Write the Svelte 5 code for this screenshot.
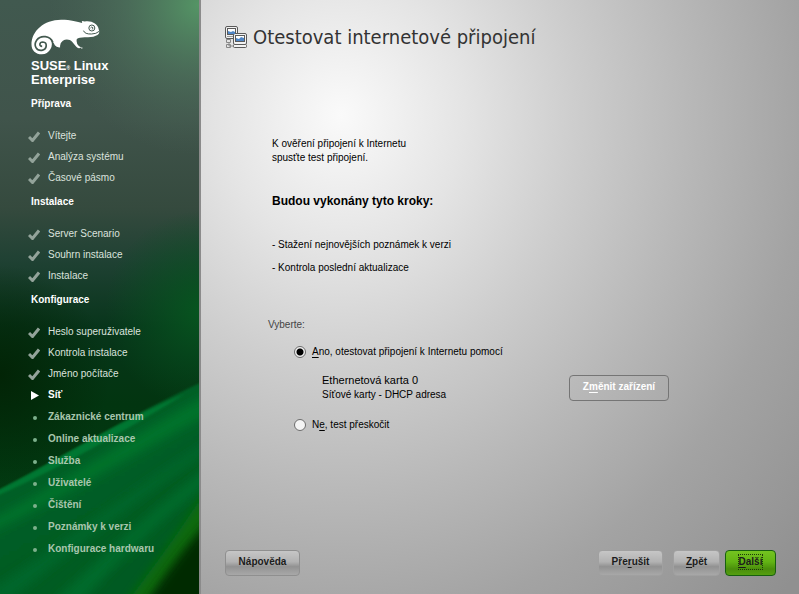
<script>
  const sections = [
    {
      title: 'Příprava',
      steps: [
        { label: 'Vítejte', state: 'done' },
        { label: 'Analýza systému', state: 'done' },
        { label: 'Časové pásmo', state: 'done' }
      ]
    },
    {
      title: 'Instalace',
      steps: [
        { label: 'Server Scenario', state: 'done' },
        { label: 'Souhrn instalace', state: 'done' },
        { label: 'Instalace', state: 'done' }
      ]
    },
    {
      title: 'Konfigurace',
      steps: [
        { label: 'Heslo superuživatele', state: 'done' },
        { label: 'Kontrola instalace', state: 'done' },
        { label: 'Jméno počítače', state: 'done' },
        { label: 'Síť', state: 'current' },
        { label: 'Zákaznické centrum', state: 'pending' },
        { label: 'Online aktualizace', state: 'pending' },
        { label: 'Služba', state: 'pending' },
        { label: 'Uživatelé', state: 'pending' },
        { label: 'Čištění', state: 'pending' },
        { label: 'Poznámky k verzi', state: 'pending' },
        { label: 'Konfigurace hardwaru', state: 'pending' }
      ]
    }
  ];

  let choice = $state('yes');
</script>

<div class="installer">
  <aside>
    <svg class="backdrop" viewBox="0 0 199 594" preserveAspectRatio="none" aria-hidden="true">
      <defs>
        <linearGradient id="base" x1="0" y1="0" x2="0" y2="1">
          <stop offset="0" stop-color="#41594f" />
          <stop offset="0.2" stop-color="#40544b" />
          <stop offset="0.35" stop-color="#354a3e" />
          <stop offset="0.44" stop-color="#1f4133" />
          <stop offset="0.55" stop-color="#08351b" />
          <stop offset="0.68" stop-color="#023510" />
          <stop offset="1" stop-color="#014012" />
        </linearGradient>
        <radialGradient id="corner" gradientUnits="userSpaceOnUse" cx="199" cy="5" r="150">
          <stop offset="0" stop-color="#549565" />
          <stop offset="0.5" stop-color="#517a60" stop-opacity="0.5" />
          <stop offset="1" stop-color="#4c6858" stop-opacity="0" />
        </radialGradient>
        <radialGradient id="glow" gradientUnits="userSpaceOnUse" cx="205" cy="310" r="100">
          <stop offset="0" stop-color="#06561f" />
          <stop offset="1" stop-color="#06501f" stop-opacity="0" />
        </radialGradient>
        <radialGradient id="shade" gradientUnits="userSpaceOnUse" cx="0" cy="375" r="110">
          <stop offset="0" stop-color="#022406" />
          <stop offset="1" stop-color="#022406" stop-opacity="0" />
        </radialGradient>
        <linearGradient id="wave" x1="0" y1="0" x2="0.5" y2="1">
          <stop offset="0" stop-color="#02632a" />
          <stop offset="1" stop-color="#015a22" />
        </linearGradient>
        <filter id="soft" x="-20%" y="-20%" width="140%" height="140%">
          <feGaussianBlur stdDeviation="5" />
        </filter>
        <filter id="edge" x="-10%" y="-10%" width="120%" height="120%">
          <feGaussianBlur stdDeviation="1" />
        </filter>
      </defs>
      <rect width="199" height="594" fill="url(#base)" />
      <rect width="199" height="200" fill="url(#corner)" />
      <rect y="200" width="199" height="215" fill="url(#glow)" />
      <rect y="260" width="199" height="230" fill="url(#shade)" />
      <path d="M-5 492C55 462 120 420 204 381V600H-5Z" fill="url(#wave)" filter="url(#edge)" />
      <path d="M-5 492C55 462 120 420 185 394C120 434 60 468 -5 497Z" fill="#067730" filter="url(#edge)" />
      <path d="M-10 520C50 490 130 437 210 393V414C140 450 60 500 -10 532Z" fill="#02722c" filter="url(#soft)" />
      <path d="M-10 590C60 545 130 490 210 440V450C130 505 60 560 10 600H-10Z" fill="#03662a" filter="url(#soft)" />
      <path d="M50 604C100 560 150 510 210 465V482C150 527 110 570 80 604Z" fill="#046b2a" filter="url(#soft)" />
      <path d="M125 604C155 565 180 530 206 490V545L150 604Z" fill="#076a10" filter="url(#soft)" />
      <path d="M145 604C168 570 186 545 210 520V614Z" fill="#032c06" filter="url(#soft)" />
    </svg>

    <div class="side">
      <header class="brand">
        <svg class="chameleon" viewBox="22 16 206 108" role="img" aria-label="SUSE">
          <path
            fill="#fff"
            d="M23 93C23 52 60 18 112 18C142 18 160 24 175 28L174 22Q181 24 187 23Q203 22 212 29Q223 36 225 48Q229 60 221 64Q210 71 193 71Q167 69 159 76Q156 88 165 97L171 101Q172 104 165 104C154 100 148 84 138 79Q127 75 117 81Q107 88 109 101Q98 102 93 95Q89 86 82 80Q87 95 80 106Q71 122 54 122C36 122 23 110 23 93Z"
          />
          <circle cx="174" cy="103" r="2" fill="#fff" />
          <path
            fill="none"
            stroke="#43594f"
            stroke-width="5"
            d="M87 86C79 66 51 63 39 79C27 96 39 112 54 110C71 107 71 86 57 85C46 85 45 98 55 98"
          />
          <circle cx="204" cy="43" r="9" fill="none" stroke="#43594f" stroke-width="3" />
          <path d="M200 43q3-5 7-1q1 4-3 5" fill="none" stroke="#43594f" stroke-width="3" />
          <path d="M179 51Q183 62 203 61Q217 61 226 53" fill="none" stroke="#43594f" stroke-width="3" />
        </svg>
        <div class="product">
          <div>SUSE<small>®</small> Linux</div>
          <div>Enterprise</div>
        </div>
      </header>

      <nav aria-label="Postup">
        {#each sections as section}
          <h2>{section.title}</h2>
          <ul>
            {#each section.steps as step}
              <li class={step.state} aria-current={step.state === 'current' ? 'step' : undefined}>
                <svg class="mark" viewBox="0 0 12 12" aria-hidden="true">
                  {#if step.state === 'done'}
                    <path d="M1 7L4.500 10.500L11 2.500" fill="none" stroke="#93a39a" stroke-width="3" />
                  {:else if step.state === 'current'}
                    <path d="M3 2L11 6.500L3 11Z" fill="#fff" />
                  {:else}
                    <circle cx="7" cy="7" r="2" fill="#7cb08c" />
                  {/if}
                </svg>
                <span>{step.label}</span>
              </li>
            {/each}
          </ul>
        {/each}
      </nav>
    </div>
  </aside>

  <main>
    <header class="title">
      <svg viewBox="0 0 22 23" aria-hidden="true">
        <g stroke="#5a5a5a">
          <rect x="0.500" y="0.500" width="12" height="12" rx="1.500" fill="#f2f2f2" />
          <rect x="2.500" y="2.500" width="8" height="6" fill="#fff" />
          <path d="M1.500 13.500h4v3h-4zM1.500 18.500h4v3h-4z" fill="#e4e4e4" stroke="#888" />
          <rect x="8.500" y="7.500" width="13" height="11" rx="1.500" fill="#f2f2f2" />
          <rect x="10.500" y="9.500" width="9" height="6" fill="#fff" />
          <rect x="8.500" y="18.500" width="13" height="3" rx="1" fill="#f2f2f2" />
        </g>
        <path d="M3 5l3 1l2-1l2 1v2H3zM11 12l3 1l2-2l3 1v3h-8z" fill="#4f86c6" />
        <path d="M2 10.500h6" stroke="#999" />
        <path d="M4 16v4h4" stroke="#888" fill="none" />
      </svg>
      <h1>Otestovat internetové připojení</h1>
    </header>

    <section class="intro">
      <p>K ověření připojení k Internetu<br />spusťte test připojení.</p>
      <h3>Budou vykonány tyto kroky:</h3>
      <p class="task">- Stažení nejnovějších poznámek k verzi</p>
      <p class="task">- Kontrola poslední aktualizace</p>
    </section>

    <fieldset>
      <legend>Vyberte:</legend>
      <label>
        <input type="radio" name="test" value="yes" bind:group={choice} />
        <span><u>A</u>no, otestovat připojení k Internetu pomocí</span>
      </label>
      <div class="device">
        <p><span class="card">Ethernetová karta 0</span><br />Síťové karty - DHCP adresa</p>
        <button type="button" class="change">Z<u>m</u>ěnit zařízení</button>
      </div>
      <label>
        <input type="radio" name="test" value="no" bind:group={choice} />
        <span>N<u>e</u>, test přeskočit</span>
      </label>
    </fieldset>

    <footer>
      <button type="button" class="help">Nápověda</button>
      <button type="button" class="abort">Pře<u>r</u>ušit</button>
      <button type="button" class="back"><u>Z</u>pět</button>
      <button type="button" class="next"><span><u>D</u>alší</span></button>
    </footer>
  </main>
</div>

<style>
  :global(body) {
    margin: 0;
  }

  .installer {
    display: flex;
    min-height: 100vh;
    font: 10px/14px 'Liberation Sans', Arial, sans-serif;
    color: #000;
  }

  h1,
  h2,
  h3,
  p,
  ul {
    margin: 0;
    padding: 0;
  }

  u {
    text-underline-offset: 2px;
    text-decoration-thickness: 1px;
    text-decoration-skip-ink: none;
  }

  aside {
    position: relative;
    flex: 0 0 199px;
    border-right: 2px solid #8b8b8b;
    background: #02400f;
  }

  .backdrop {
    position: absolute;
    inset: 0;
    width: 100%;
    height: 100%;
  }

  .side {
    position: relative;
    padding: 19px 16px 20px 28px;
  }

  .brand {
    padding-left: 3px;
  }

  .chameleon {
    display: block;
    width: 69px;
    height: 36px;
  }

  .product {
    margin: 4px 0 7px;
    font: bold 13px/14px 'Liberation Sans', Arial, sans-serif;
    color: #fff;
  }

  .product small {
    font-size: 5px;
    line-height: 5px;
  }

  h2 {
    padding-left: 3px;
    font-size: 10px;
    line-height: 20px;
    color: #fff;
  }

  ul {
    padding: 11px 0 4px;
    list-style: none;
  }

  li {
    display: flex;
    align-items: center;
    gap: 8px;
    height: 21px;
    color: #dbe2dd;
  }

  .mark {
    width: 12px;
    height: 12px;
  }

  .current {
    height: 22px;
    font-weight: bold;
    color: #fff;
  }

  .pending {
    height: 22px;
    font-weight: bold;
    color: #a9c6ae;
  }

  main {
    flex: 1;
    display: flex;
    flex-direction: column;
    padding: 24px 23px 18px 24px;
    background: radial-gradient(ellipse 620px 680px at 140px 115px, #fafafa 0%, #e4e4e4 20%, #cdcdcd 38%, #b8b8b8 56%, #a3a3a3 75%, #909090 100%);
  }

  .title {
    display: flex;
    align-items: center;
    gap: 6px;
    height: 26px;
  }

  .title svg {
    width: 22px;
    height: 23px;
  }

  h1 {
    font: 20px/26px 'DejaVu Sans Condensed', 'DejaVu Sans', sans-serif;
    color: #333;
  }

  .intro {
    padding: 87px 0 0 47px;
  }

  h3 {
    margin: 26px 0 22px;
    font-size: 12px;
    line-height: 20px;
  }

  .task {
    line-height: 23px;
  }

  fieldset {
    margin: 39px 0 0;
    padding: 0 0 0 69px;
    border: 0;
  }

  legend {
    margin-left: -26px;
    padding: 0;
    color: #444;
  }

  label {
    display: flex;
    align-items: center;
    gap: 6px;
    height: 14px;
  }

  legend + label {
    margin-top: 13px;
  }

  input {
    appearance: none;
    width: 12px;
    height: 12px;
    margin: 0;
    border: 1px solid #6c6c6c;
    border-radius: 50%;
    background: #f4f4f4;
  }

  input:checked {
    background: radial-gradient(circle, #000 0 3px, #f0f0f0 4px);
  }

  .device {
    display: flex;
    align-items: center;
    justify-content: space-between;
    margin: 14px 107px 16px 28px;
  }

  .card {
    font-size: 11px;
  }

  button {
    box-sizing: border-box;
    height: 26px;
    padding: 0 0 2px;
    border: 1px solid #a0a0a0;
    border-radius: 4px;
    background: linear-gradient(#c6c6c6, #b2b2b2 45%, #929292 65%, #a8a8a8);
    font: bold 10px/14px 'Liberation Sans', Arial, sans-serif;
    color: #1c1c1c;
  }

  .change {
    width: 100px;
    border-color: #757575;
    background: none;
    color: #fff;
  }

  footer {
    display: flex;
    margin-top: auto;
  }

  .help {
    width: 75px;
    margin-right: auto;
    border-color: #8f8f8f;
  }

  .abort {
    width: 65px;
    margin-right: 10px;
  }

  .back {
    width: 47px;
    margin-right: 5px;
  }

  .next {
    width: 51px;
    border-color: #17600f;
    background: linear-gradient(#74c420, #62b414 45%, #4a8e0c 75%, #559f10);
  }

  .next span {
    display: inline-block;
    outline: 1px dotted #1c3a08;
  }
</style>
